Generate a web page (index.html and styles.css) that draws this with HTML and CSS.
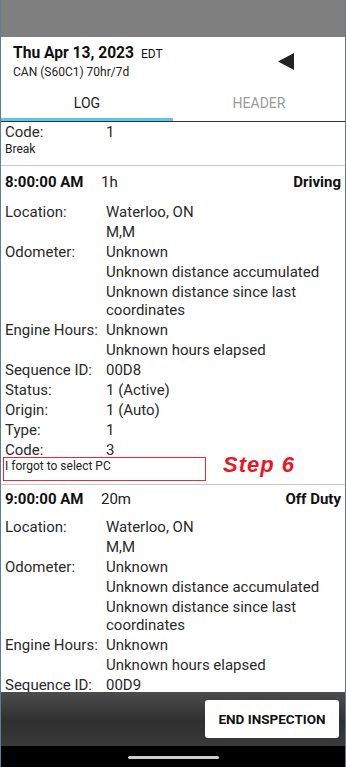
FILE: index.html
```html
<!DOCTYPE html>
<html>
<head>
<meta charset="utf-8">
<link rel="stylesheet" href="styles.css">
</head>
<body>
<div class="phone">
  <div class="statusbar"></div>
  <div class="header">
    <div class="header-text">
      <div class="date">Thu Apr 13, 2023 <span class="tz">EDT</span></div>
      <div class="rule">CAN (S60C1) 70hr/7d</div>
    </div>
    <svg class="back" width="16" height="17" viewBox="0 0 16 17"><polygon points="16,0 16,17 0,8.5" fill="#222"/></svg>
  </div>
  <div class="tabs">
    <div class="tab active">LOG</div>
    <div class="tab">HEADER</div>
  </div>
  <div class="content">
    <div class="entry tail">
      <div class="row"><span class="label">Code:</span><span class="value">1</span></div>
      <div class="note">Break</div>
    </div>
    <div class="entry">
      <div class="entry-head"><span class="time">8:00:00 AM</span><span class="dur">1h</span><span class="status">Driving</span></div>
      <div class="row"><span class="label">Location:</span><span class="value">Waterloo, ON</span></div>
      <div class="row"><span class="label"></span><span class="value">M,M</span></div>
      <div class="row"><span class="label">Odometer:</span><span class="value">Unknown</span></div>
      <div class="row"><span class="label"></span><span class="value">Unknown distance accumulated</span></div>
      <div class="row"><span class="label"></span><span class="value">Unknown distance since last coordinates</span></div>
      <div class="row"><span class="label">Engine Hours:</span><span class="value">Unknown</span></div>
      <div class="row"><span class="label"></span><span class="value">Unknown hours elapsed</span></div>
      <div class="row"><span class="label">Sequence ID:</span><span class="value">00D8</span></div>
      <div class="row"><span class="label">Status:</span><span class="value">1 (Active)</span></div>
      <div class="row"><span class="label">Origin:</span><span class="value">1 (Auto)</span></div>
      <div class="row"><span class="label">Type:</span><span class="value">1</span></div>
      <div class="row"><span class="label">Code:</span><span class="value">3</span></div>
      <div class="note annotated">I forgot to select PC<span class="step-box"></span><span class="step-label">Step 6</span></div>
    </div>
    <div class="entry">
      <div class="entry-head compact"><span class="time">9:00:00 AM</span><span class="dur">20m</span><span class="status">Off Duty</span></div>
      <div class="row"><span class="label">Location:</span><span class="value">Waterloo, ON</span></div>
      <div class="row"><span class="label"></span><span class="value">M,M</span></div>
      <div class="row"><span class="label">Odometer:</span><span class="value">Unknown</span></div>
      <div class="row"><span class="label"></span><span class="value">Unknown distance accumulated</span></div>
      <div class="row"><span class="label"></span><span class="value">Unknown distance since last coordinates</span></div>
      <div class="row"><span class="label">Engine Hours:</span><span class="value">Unknown</span></div>
      <div class="row"><span class="label"></span><span class="value">Unknown hours elapsed</span></div>
      <div class="row"><span class="label">Sequence ID:</span><span class="value">00D9</span></div>
      <div class="row"><span class="label">Status:</span><span class="value">1 (Active)</span></div>
    </div>
  </div>
  <div class="bottombar">
    <button class="end-btn">END INSPECTION</button>
  </div>
  <div class="navbar"><span class="pill"></span></div>
</div>
</body>
</html>
```
FILE: styles.css
```css
html, body {
  margin: 0;
  padding: 0;
  background: #fff;
}
body {
  font-family: Roboto, "Noto Sans", sans-serif;
  color: #222;
}
.phone {
  width: 346px;
  height: 767px;
  box-sizing: border-box;
  border-left: 1px solid #5f7c98;
  border-right: 1px solid #5f7c98;
  display: flex;
  flex-direction: column;
  overflow: hidden;
}
.statusbar {
  height: 37px;
  background: #7f7f7f;
  flex: none;
}
.header {
  flex: none;
  height: 48px;
  box-sizing: border-box;
  display: flex;
  align-items: flex-start;
  justify-content: space-between;
  padding: 6px 51px 0 12px;
}
.date {
  font-size: 15.6px;
  font-weight: 700;
  line-height: 20px;
  color: #111;
}
.tz {
  font-size: 12px;
  font-weight: 400;
  margin-left: 3px;
}
.rule {
  font-size: 12px;
  line-height: 16px;
  margin-top: 0;
  color: #222;
}
.back {
  margin-top: 10px;
}
.tabs {
  flex: none;
  display: flex;
  height: 37px;
  box-sizing: border-box;
  border-bottom: 1px solid #333;
}
.tab {
  flex: 1;
  text-align: center;
  font-size: 14px;
  line-height: 30px;
  padding-top: 3px;
  color: #9a9a9a;
  box-sizing: border-box;
}
.tab.active {
  color: #222;
  border-bottom: 3px solid #56c8f2;
}
.content {
  flex: 1;
  overflow: hidden;
}
.entry {
  border-bottom: 1px solid #c9c9c9;
  position: relative;
}
.entry.tail .row {
  padding: 1px 0 0 0;
}
.entry.tail .note {
  line-height: 16px;
  padding-bottom: 8px;
}
.entry-head {
  display: flex;
  font-size: 15px;
  line-height: 20px;
  padding: 6px 4px 10px 4px;
}
.entry-head.compact {
  padding: 4px 4px 8px 4px;
}
.time {
  font-weight: 700;
  width: 96px;
  color: #111;
}
.dur {
  flex: 1;
}
.status {
  font-weight: 700;
  color: #111;
}
.row {
  display: flex;
  font-size: 15px;
  line-height: 18px;
  padding: 1px 0;
  color: #2a2a2a;
}
.label {
  width: 105px;
  padding-left: 4px;
  box-sizing: border-box;
  flex: none;
}
.value {
  flex: 1;
  padding-right: 20px;
}
.note {
  font-size: 12px;
  line-height: 13px;
  padding: 0 4px 11px 4px;
  color: #222;
  position: relative;
}
.step-box {
  position: absolute;
  left: 2px;
  top: -3px;
  width: 203px;
  height: 24px;
  box-sizing: border-box;
  border: 1.5px solid #ec2a32;
  z-index: 1;
}
.step-label {
  position: absolute;
  left: 222px;
  top: -8px;
  font-family: "Liberation Sans", Arial, sans-serif;
  font-size: 22px;
  font-weight: 700;
  font-style: italic;
  letter-spacing: 1px;
  color: #f0141e;
  line-height: 26px;
}
.bottombar {
  flex: none;
  height: 54px;
  background: linear-gradient(#4c4c4c, #2f2f2f 55%, #3a3a3a);
  display: flex;
  justify-content: flex-end;
  align-items: center;
  padding-right: 6px;
}
.end-btn {
  width: 134px;
  height: 38px;
  background: #fff;
  border: none;
  border-radius: 3px;
  font-family: Roboto, sans-serif;
  font-weight: 700;
  font-size: 13.5px;
  color: #111;
  padding: 0;
}
.navbar {
  flex: none;
  height: 21px;
  background: #000;
  display: flex;
  justify-content: center;
  align-items: center;
}
.pill {
  width: 91px;
  height: 3px;
  border-radius: 2px;
  background: #ccc;
  margin-top: 1px;
}
```
